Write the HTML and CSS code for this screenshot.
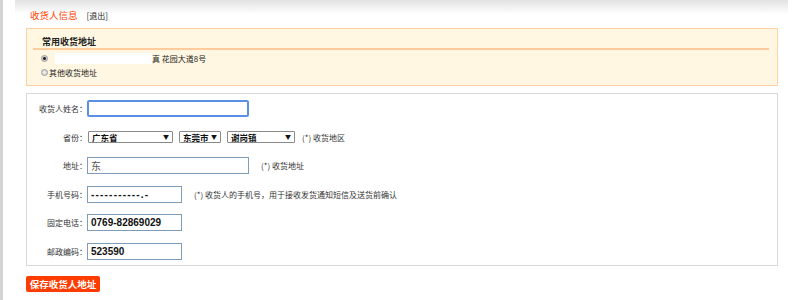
FILE: index.html
```html
<!DOCTYPE html>
<html lang="zh-CN">

<head>
    <meta charset="UTF-8">
    <meta name="viewport" content="width=device-width, initial-scale=1.0">
    <title>收货人信息</title>
    <link rel="stylesheet" href="styles.css">
</head>

<body>
    <div class="page">
        <div class="head">
            <span class="head-title">收货人信息</span>
            <a class="head-exit" href="#">[退出]</a>
        </div>

        <div class="common">
            <div class="common-title">常用收货地址</div>
            <label class="common-item">
                <input type="radio" name="addr" class="radio" checked>
                <span class="blank"></span>真 花园大道8号
            </label>
            <label class="common-item">
                <input type="radio" name="addr" class="radio">其他收货地址
            </label>
        </div>

        <div class="form">
            <div class="label">收货人姓名：</div>
            <div class="field">
                <input type="text" class="txt txt-long focus" value="">
            </div>

            <div class="label">省份：</div>
            <div class="field">
                <span class="sel sel-1"><select><option>广东省</option></select></span>
                <span class="sel sel-2"><select><option>东莞市</option></select></span>
                <span class="sel sel-3"><select><option>谢岗镇</option></select></span>
                <span class="hint">(*) 收货地区</span>
            </div>

            <div class="label">地址：</div>
            <div class="field">
                <input type="text" class="txt txt-long faint" value="东">
                <span class="hint hint-far">(*) 收货地址</span>
            </div>

            <div class="label">手机号码：</div>
            <div class="field">
                <input type="text" class="txt txt-short dashes" value="-----------.-">
                <span class="hint hint-far">(*) 收货人的手机号，用于接收发货通知短信及送货前确认</span>
            </div>

            <div class="label">固定电话：</div>
            <div class="field">
                <input type="text" class="txt txt-short" value="0769-82869029">
            </div>

            <div class="label">邮政编码：</div>
            <div class="field">
                <input type="text" class="txt txt-short" value="523590">
            </div>
        </div>

        <button class="save">保存收货人地址</button>
    </div>
</body>

</html>
```

FILE: styles.css
```css
body {
    margin: 0;
    background: #fff;
    font-family: "Noto Sans CJK SC", "Liberation Sans", sans-serif;
    color: #333;
}

.page {
    border-left: 3px solid #d4d4d4;
    height: 300px;
    box-sizing: border-box;
    padding-right: 22px;
}

.head {
    margin: 0 -10px 0 12px;
    height: 28px;
    box-sizing: border-box;
    padding: 9px 0 0 15px;
    background: linear-gradient(#e2e2e2, #fff 14px);
    font-size: 9px;
    line-height: 12px;
}
.head-title {
    color: #ff4400;
    font-size: 9.5px;
}
.head-exit {
    color: #222;
    text-decoration: none;
    font-size: 8px;
    margin-left: 7px;
}

.common {
    margin-left: 23px;
    border: 1px solid #fdcfa3;
    background: #fff7e1;
    height: 58px;
    box-sizing: border-box;
    padding-top: 6px;
}
.common-title {
    margin: 0 8px 0 6px;
    padding-left: 9px;
    font-size: 9px;
    font-weight: bold;
    color: #222;
    line-height: 13px;
    border-bottom: 2px solid #ffcb9c;
}
.common-item {
    display: flex;
    align-items: center;
    padding-left: 14px;
    font-size: 8px;
    color: #222;
    height: 14px;
}
.common-item:first-of-type {
    margin-top: 1px;
}
.radio {
    appearance: none;
    margin: 0 1px 0 0;
    width: 7px;
    height: 7px;
    border-radius: 50%;
    border: 1px solid #999;
    background: radial-gradient(#f2f2f2, #c8c8c8);
    box-sizing: border-box;
}
.radio:checked {
    background: radial-gradient(#222 35%, #ccc 45%, #e6e6e6);
}
.blank {
    display: inline-block;
    width: 97px;
    height: 11px;
    background: #fff;
    margin-left: 6px;
}

.form {
    margin: 7px 0 0 23px;
    border: 1px solid #d9d9d9;
    padding: 6px 0;
    display: grid;
    grid-template-columns: 60px 1fr;
    row-gap: 11.5px;
    height: 173px;
    box-sizing: border-box;
}
.label {
    text-align: right;
    font-size: 8px;
    line-height: 17px;
    color: #333;
}
.field {
    display: flex;
    align-items: center;
    height: 17px;
}

.txt {
    box-sizing: border-box;
    height: 17px;
    border: 1px solid #7f9db9;
    padding: 0 3px;
    font-family: "Liberation Sans", sans-serif;
    font-weight: bold;
    font-size: 10px;
    color: #111;
    outline: none;
}
.txt-long {
    width: 162px;
}
.txt-short {
    width: 95px;
}
.focus {
    border: 2px solid #5b8ee6;
    border-radius: 2px;
}
.faint {
    font-weight: normal;
    color: #555;
}
.dashes {
    letter-spacing: 1.2px;
}

.sel {
    position: relative;
    display: inline-block;
    margin-right: 6px;
}
.sel select {
    appearance: none;
    width: 100%;
    height: 12px;
    box-sizing: border-box;
    border: 1px solid #8a8a8a;
    border-radius: 1px;
    background: #fff;
    padding: 0 0 0 3px;
    font-family: "Noto Sans CJK SC", sans-serif;
    font-weight: bold;
    font-size: 8.5px;
    line-height: 10px;
    color: #111;
    display: block;
}
.sel::after {
    content: "▼";
    position: absolute;
    right: 4px;
    top: 2px;
    font-size: 6px;
    line-height: 8px;
    color: #111;
}
.sel-1 {
    width: 85px;
    margin-left: 1px;
}
.sel-2 {
    width: 42px;
}
.sel-3 {
    width: 68px;
}

.hint {
    font-size: 8px;
    color: #333;
    margin-left: 1px;
}
.hint-far {
    margin-left: 12px;
}

.save {
    margin: 10px 0 0 23px;
    display: block;
    width: 74px;
    height: 16px;
    padding: 0;
    border: none;
    border-radius: 2px;
    background: #ff3c00;
    color: #fff;
    font-family: "Noto Sans CJK SC", sans-serif;
    font-weight: bold;
    font-size: 9.5px;
    line-height: 16px;
}
```
